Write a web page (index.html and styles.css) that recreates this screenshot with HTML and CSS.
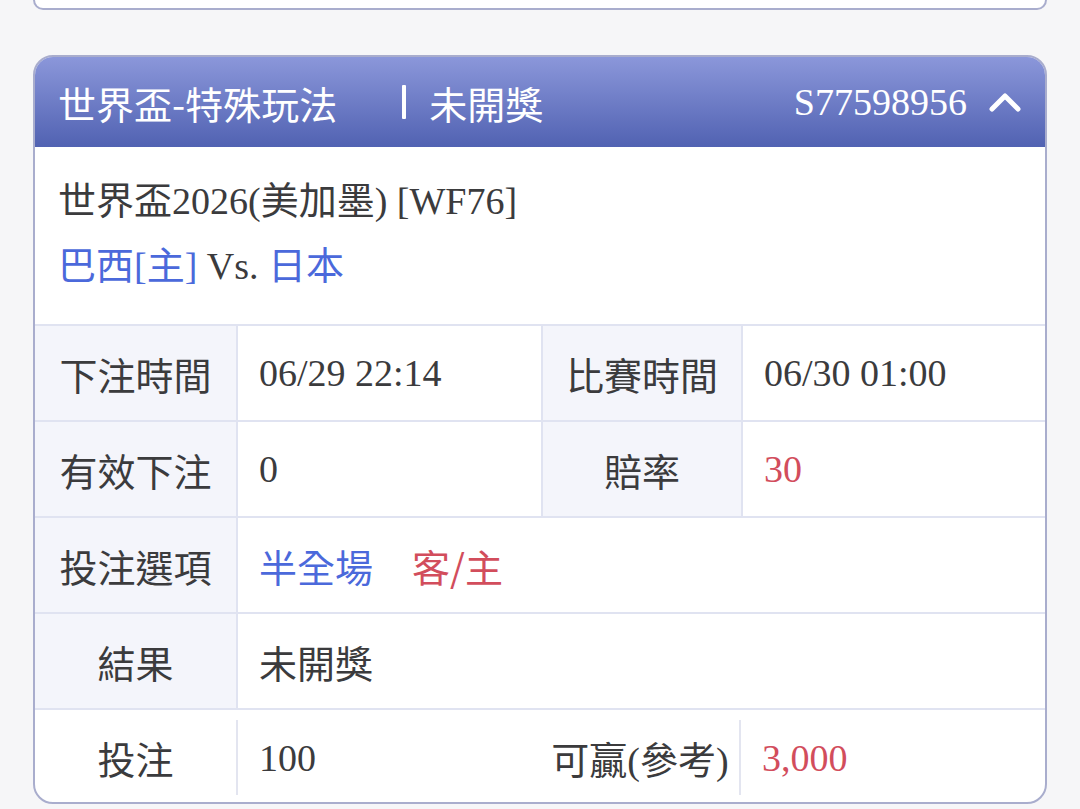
FILE: index.html
```html
<!DOCTYPE html>
<html lang="zh-Hant">
<head>
    <meta charset="UTF-8">
    <meta name="viewport" content="width=device-width, initial-scale=1.0">
    <title>注單明細</title>
    <link rel="stylesheet" href="styles.css">
</head>
<body>
    <div class="list">
        <div class="bet-card bet-card--tail"></div>

        <div class="bet-card">
            <div class="bet-head">
                <span class="bet-title">世界盃-特殊玩法</span>
                <span class="bet-status">未開獎</span>
                <span class="bet-no">S77598956</span>
                <svg class="bet-toggle" width="34" height="22" viewBox="0 0 34 22">
                    <path d="M4 18 L17 5 L30 18" fill="none" stroke="#fff" stroke-width="5" stroke-linecap="round" stroke-linejoin="round"/>
                </svg>
            </div>

            <div class="bet-match">
                <div>世界盃2026(美加墨) [WF76]</div>
                <div><span class="blue">巴西[主]</span> Vs. <span class="blue">日本</span></div>
            </div>

            <div class="bet-grid">
                <div class="cell label">下注時間</div>
                <div class="cell">06/29 22:14</div>
                <div class="cell label">比賽時間</div>
                <div class="cell">06/30 01:00</div>

                <div class="cell label">有效下注</div>
                <div class="cell">0</div>
                <div class="cell label">賠率</div>
                <div class="cell red">30</div>

                <div class="cell label">投注選項</div>
                <div class="cell wide"><span class="blue">半全場</span><span class="red pick">客/主</span></div>

                <div class="cell label">結果</div>
                <div class="cell wide">未開獎</div>
            </div>

            <div class="bet-foot">
                <div class="foot-cell center">投注</div>
                <div class="foot-cell divided">100</div>
                <div class="foot-cell center">可贏(參考)</div>
                <div class="foot-cell divided red">3,000</div>
            </div>
        </div>
    </div>
</body>
</html>
```

FILE: styles.css
```css
/* --- BASE ---------------------------------------------- */
* { box-sizing: border-box; margin: 0; padding: 0; }
html, body {
    background: #f6f6f8;
    font-family: "Liberation Serif", "Noto Sans CJK TC", serif;
    font-size: 38px;
    color: #3b3b3d;
}

.list { padding: 0 33px; }

.blue { color: #4b69db; }
.red  { color: #d24d5c; }

/* --- CARD ---------------------------------------------- */
.bet-card {
    border: 2px solid #a9adcd;
    border-radius: 20px;
    background: #fff;
    overflow: hidden;
    margin-top: 45px;
}
/* bottom of the previous card in the list */
.bet-card--tail {
    height: 10px;
    margin-top: 0;
    border-top: none;
    border-radius: 0 0 20px 20px;
}

/* --- HEADER -------------------------------------------- */
.bet-head {
    height: 90px;
    display: flex;
    align-items: center;
    padding: 0 23px;
    color: #fff;
    background: linear-gradient(to bottom, #8b97da, #5162b2);
}
.bet-title { font-family: "Noto Sans CJK TC", sans-serif; }
.bet-status {
    display: flex;
    align-items: center;
    margin-left: 65px;
    font-family: "Noto Sans CJK TC", sans-serif;
}
.bet-status::before {
    content: "";
    width: 4px;
    height: 34px;
    margin-right: 23px;
    background: #fff;
    border-radius: 1px;
}
.bet-no { margin-left: auto; }
.bet-toggle { margin-left: 21px; }

/* --- MATCH INFO ---------------------------------------- */
.bet-match {
    height: 177px;
    padding: 22px 23px 0;
    line-height: 65px;
}

/* --- DETAIL GRID --------------------------------------- */
.bet-grid {
    display: grid;
    grid-template-columns: 201px 303px 198px 1fr;
    grid-auto-rows: 94px;
    gap: 2px;
    padding-top: 2px;
    background: #e0e3f1;
}
.cell {
    display: flex;
    align-items: center;
    padding-left: 21px;
    background: #fff;
}
.cell.label {
    justify-content: center;
    padding-left: 0;
    background: #f4f5fb;
    font-family: "Noto Sans CJK TC", sans-serif;
}
.cell.wide { grid-column: span 3; }
.pick { margin-left: 39px; font-family: "Noto Sans CJK TC", sans-serif; }

/* --- FOOTER ROW ---------------------------------------- */
.bet-foot {
    display: grid;
    grid-template-columns: 201px 305px 198px 1fr;
    height: 94px;
    padding: 10px 0 7px;
    border-top: 2px solid #e0e3f1;
}
.foot-cell {
    display: flex;
    align-items: center;
    padding-left: 21px;
}
.foot-cell.center { justify-content: center; padding-left: 0; }
.foot-cell.divided { border-left: 2px solid #e3e5f0; }
```
